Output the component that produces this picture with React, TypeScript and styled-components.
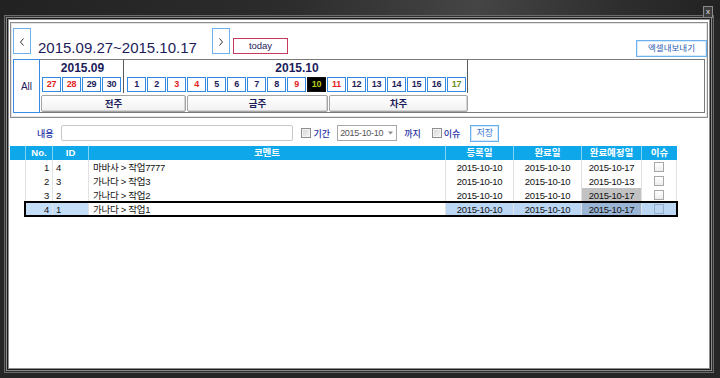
import React from 'react';
import styled, { createGlobalStyle } from 'styled-components';

const GlobalStyle = createGlobalStyle`
  html, body { margin: 0; padding: 0; background: #262626; }
  body { font-family: "Liberation Sans", "Noto Sans CJK KR", sans-serif; font-size: 10px; }
  * { box-sizing: border-box; }
`;

const NAVY = '#1c1c5a';
const RED = '#e02424';

type Day = { n: number; color?: string; today?: boolean };

const sepDays: Day[] = [
  { n: 27, color: RED },
  { n: 28, color: RED },
  { n: 29 },
  { n: 30 },
];

const octDays: Day[] = Array.from({ length: 17 }, (_, i) => {
  const n = i + 1;
  if (n === 10) return { n, today: true };
  if ([3, 4, 9, 11].includes(n)) return { n, color: RED };
  if (n === 17) return { n, color: '#6b8a2a' };
  return { n };
});

const rows = [
  { no: 1, id: 4, comment: '마바사 > 작업7777', reg: '2015-10-10', done: '2015-10-10', due: '2015-10-17' },
  { no: 2, id: 3, comment: '가나다 > 작업3', reg: '2015-10-10', done: '2015-10-10', due: '2015-10-13' },
  { no: 3, id: 2, comment: '가나다 > 작업2', reg: '2015-10-10', done: '2015-10-10', due: '2015-10-17', marked: true },
  { no: 4, id: 1, comment: '가나다 > 작업1', reg: '2015-10-10', done: '2015-10-10', due: '2015-10-17', selected: true },
];

const App = () => {
  return (
    <Window>
      <GlobalStyle />
      <TitleBar>
        <CloseBtn>x</CloseBtn>
      </TitleBar>
      <Frame>
        <Panel>
          <HeadRow>
            <NavBtn>
              <svg width="6" height="8" viewBox="0 0 6 8">
                <polyline points="4.5,0.5 1.5,4 4.5,7.5" fill="none" stroke="#333" strokeWidth="1" />
              </svg>
            </NavBtn>
            <RangeTitle>2015.09.27~2015.10.17</RangeTitle>
            <NavBtn>
              <svg width="6" height="8" viewBox="0 0 6 8">
                <polyline points="1.5,0.5 4.5,4 1.5,7.5" fill="none" stroke="#333" strokeWidth="1" />
              </svg>
            </NavBtn>
            <TodayBtn>today</TodayBtn>
            <ExcelBtn>엑셀내보내기</ExcelBtn>
          </HeadRow>

          <CalBox>
            <AllCell>All</AllCell>
            <CalArea>
              <MonthsBlock>
                <MonthRow>
                  <MonthPanel $w={84} $pl={2}>
                    <MonthLabel>2015.09</MonthLabel>
                    <DayRow>
                      {sepDays.map((d) => (
                        <DayCell key={d.n} $color={d.color}>{d.n}</DayCell>
                      ))}
                    </DayRow>
                  </MonthPanel>
                  <MonthPanel $w={344} $pl={3}>
                    <MonthLabel>2015.10</MonthLabel>
                    <DayRow>
                      {octDays.map((d) => (
                        <DayCell key={d.n} $color={d.color} $today={d.today}>{d.n}</DayCell>
                      ))}
                    </DayRow>
                  </MonthPanel>
                </MonthRow>
                <WeekRow>
                  <WeekBtn>전주</WeekBtn>
                  <WeekBtn>금주</WeekBtn>
                  <WeekBtn>차주</WeekBtn>
                </WeekRow>
              </MonthsBlock>
            </CalArea>
          </CalBox>
        </Panel>

        <SearchRow>
          <Label>내용</Label>
          <TextBox $ml={7} />
          <Check $ml={8} />
          <Label $ml={3}>기간</Label>
          <Combo>
            <span>2015-10-10</span>
            <svg width="5" height="4" viewBox="0 0 5 4">
              <polygon points="0,0.5 5,0.5 2.5,3.5" fill="#8a8a8a" />
            </svg>
          </Combo>
          <Label $ml={7}>까지</Label>
          <Check $ml={11} />
          <Label $ml={2}>이슈</Label>
          <SaveBtn>저장</SaveBtn>
        </SearchRow>

        <Table>
          <THead>
            <HeadCell $first />
            <HeadCell>No.</HeadCell>
            <HeadCell>ID</HeadCell>
            <HeadCell>코멘트</HeadCell>
            <HeadCell>등록일</HeadCell>
            <HeadCell>완료일</HeadCell>
            <HeadCell>완료예정일</HeadCell>
            <HeadCell>이슈</HeadCell>
          </THead>
          {rows.map((r) => (
            <Row key={r.no}>
              <RowHead />
              <RowBody $selected={r.selected}>
                <Cell $align="right" $bg={r.selected ? '#c4def8' : undefined}>{r.no}</Cell>
                <Cell $align="left" $bg={r.selected ? '#c4def8' : undefined}>{r.id}</Cell>
                <Cell $align="left" $pad={4}>{r.comment}</Cell>
                <Cell $bg={r.selected ? '#bcd7f4' : undefined}>{r.reg}</Cell>
                <Cell $bg={r.selected ? '#bcd7f4' : undefined}>{r.done}</Cell>
                <Cell $bg={r.selected ? '#9bb5d4' : r.marked ? '#c2c2c2' : undefined}>{r.due}</Cell>
                <Cell $last $bg={r.selected ? '#bcd7f4' : undefined}>
                  <IssueBox $clear={r.selected} />
                </Cell>
              </RowBody>
            </Row>
          ))}
        </Table>
      </Frame>
    </Window>
  );
};

export default App;

const Window = styled.div`
  width: 720px;
  height: 378px;
  overflow: hidden;
  background: #262626;
`;

const TitleBar = styled.div`
  height: 19px;
  display: flex;
  justify-content: flex-end;
  padding: 6px 7px 0 0;
  background: linear-gradient(90deg, #222 0%, #2c2c2c 40%, #454545 66%, #2e2e2e 86%, #222 100%);
`;

const CloseBtn = styled.div`
  width: 10px;
  height: 12px;
  border: 1px solid #8a8a8a;
  background: #3c3c3c;
  color: #e0e0e0;
  font-size: 8px;
  line-height: 9px;
  text-align: center;
`;

const Frame = styled.div`
  margin: 0 10px 0 8px;
  height: 350px;
  border: 1px solid #8e8e8e;
  background: #fff;
  padding: 2px 1px 0 1px;
  box-shadow: 0 0 0 1px #1c1c1c, 0 0 0 2px #8a8a8a, 0 0 0 3px #2e2e2e, 0 0 0 4px #6a6a6a;
`;

const Panel = styled.div`
  height: 96px;
  border: 1px solid #8c8c8c;
  box-shadow: inset 0 0 0 1px #e4e4e4;
  padding: 5px 2px 4px 2px;
  display: flex;
  flex-direction: column;
`;

const HeadRow = styled.div`
  display: flex;
  align-items: flex-start;
  height: 28px;
`;

const NavBtn = styled.div`
  width: 18px;
  height: 26px;
  border: 1px solid #6cb0ee;
  background: #fff;
  display: flex;
  justify-content: center;
  padding-top: 9px;
`;

const RangeTitle = styled.div`
  width: 174px;
  margin: 12px 0 0 7px;
  font-size: 15px;
  line-height: 15px;
  color: ${NAVY};
  white-space: nowrap;
`;

const TodayBtn = styled.div`
  width: 55px;
  height: 16px;
  margin: 10px 0 0 3px;
  border: 1px solid #c83a5c;
  color: ${NAVY};
  font-size: 9.5px;
  line-height: 14px;
  text-align: center;
`;

const ExcelBtn = styled.div`
  width: 71px;
  height: 17px;
  margin: 12px -2px 0 auto;
  border: 1px solid #6cb0ee;
  box-shadow: inset 0 0 0 1px #d8ebfc;
  color: #2a5ab0;
  font-size: 8.5px;
  line-height: 15px;
  text-align: center;
`;

const CalBox = styled.div`
  display: flex;
  height: 54px;
  margin-top: 3px;
`;

const AllCell = styled.div`
  width: 27px;
  border: 1px solid #3a8de0;
  display: flex;
  align-items: center;
  justify-content: center;
  color: ${NAVY};
  font-size: 10px;
`;

const CalArea = styled.div`
  flex: 1;
  border: 1px solid #7a7a7a;
  border-left: none;
  display: flex;
`;

const MonthsBlock = styled.div`
  width: 428px;
  display: flex;
  flex-direction: column;
`;

const MonthRow = styled.div`
  display: flex;
  height: 33px;
`;

const MonthPanel = styled.div<{ $w: number; $pl: number }>`
  width: ${(p) => p.$w}px;
  padding-left: ${(p) => p.$pl}px;
  border-right: 1px solid #5a5a5a;
`;

const MonthLabel = styled.div`
  height: 17px;
  line-height: 17px;
  text-align: center;
  font-size: 12px;
  font-weight: bold;
  color: ${NAVY};
`;

const DayRow = styled.div`
  display: flex;
  gap: 1px;
`;

const DayCell = styled.div<{ $color?: string; $today?: boolean }>`
  width: 19px;
  height: 15px;
  border: 1px solid ${(p) => (p.$today ? '#111' : '#3289e2')};
  background: ${(p) => (p.$today ? '#000' : '#fff')};
  color: ${(p) => (p.$today ? '#b4cc1e' : p.$color || NAVY)};
  font-size: 9px;
  font-weight: bold;
  line-height: 13px;
  text-align: center;
  letter-spacing: -0.3px;
`;

const WeekRow = styled.div`
  display: grid;
  grid-template-columns: 145px 141px 139px;
  column-gap: 1px;
  margin: 2px 0 0 1px;
  height: 17px;
`;

const WeekBtn = styled.div`
  border: 1px solid #a4a4a4;
  border-radius: 2px;
  background: linear-gradient(#ffffff, #f1f1f1);
  box-shadow: inset -1px -1px 0 #d4d4d4;
  color: ${NAVY};
  font-size: 9.5px;
  font-weight: bold;
  line-height: 15px;
  text-align: center;
`;

const SearchRow = styled.div`
  display: flex;
  align-items: center;
  height: 18px;
  margin-top: 6px;
  padding-left: 27px;
`;

const Label = styled.span<{ $ml?: number }>`
  margin-left: ${(p) => p.$ml || 0}px;
  color: #1f32a6;
  font-size: 9px;
  font-weight: 500;
  white-space: nowrap;
`;

const TextBox = styled.div<{ $ml: number }>`
  width: 232px;
  height: 16px;
  margin-left: ${(p) => p.$ml}px;
  border: 1px solid #c8c8c8;
  border-radius: 2px;
`;

const Check = styled.span<{ $ml: number }>`
  width: 10px;
  height: 10px;
  margin-left: ${(p) => p.$ml}px;
  border: 1px solid #8e8e8e;
  background: linear-gradient(135deg, #d4d4d4, #f6f6f6);
  box-shadow: inset 0 0 0 1px #f4f4f4;
`;

const Combo = styled.div`
  width: 60px;
  height: 16px;
  margin-left: 7px;
  border: 1px solid #a8a8a8;
  display: flex;
  align-items: center;
  justify-content: space-between;
  padding: 0 3px 0 2px;
  color: #555;
  font-size: 9px;
  letter-spacing: -0.3px;
`;

const SaveBtn = styled.div`
  width: 29px;
  height: 17px;
  margin-left: 10px;
  border: 1px solid #6aaeee;
  box-shadow: inset 0 0 0 1px #d2e8fb;
  color: #3a78d0;
  font-size: 9px;
  line-height: 15px;
  text-align: center;
`;

const Table = styled.div`
  width: 667px;
  margin-top: 4px;
`;

const THead = styled.div`
  display: grid;
  grid-template-columns: 15px 27px 36px 357px 68px 68px 60px 36px;
  height: 14px;
  background: #0ea8ea;
`;

const HeadCell = styled.div<{ $first?: boolean }>`
  border-left: ${(p) => (p.$first ? 'none' : '1px solid #82d2f3')};
  color: #fff;
  font-size: 9.5px;
  font-weight: bold;
  line-height: 14px;
  text-align: center;
  white-space: nowrap;
`;

const Row = styled.div`
  display: flex;
  height: 14px;
`;

const RowHead = styled.div`
  width: 15px;
`;

const RowBody = styled.div<{ $selected?: boolean }>`
  display: grid;
  grid-template-columns: 27px 36px 357px 68px 68px 60px 36px;
  outline: ${(p) => (p.$selected ? '2px solid #000' : 'none')};
  outline-offset: -1px;
`;

const Cell = styled.div<{ $align?: string; $bg?: string; $pad?: number; $last?: boolean }>`
  border-left: 1px solid #e2e2e2;
  border-right: ${(p) => (p.$last ? '1px solid #e2e2e2' : 'none')};
  border-bottom: 1px solid #e2e2e2;
  background: ${(p) => p.$bg || '#fff'};
  display: flex;
  align-items: center;
  justify-content: ${(p) => (p.$align === 'right' ? 'flex-end' : p.$align === 'left' ? 'flex-start' : 'center')};
  padding: 0 ${(p) => (p.$align === 'right' ? 3 : 0)}px 0 ${(p) => (p.$align === 'left' ? p.$pad || 3 : 0)}px;
  color: #111;
  font-size: 9.5px;
  letter-spacing: -0.3px;
  white-space: nowrap;
`;

const IssueBox = styled.span<{ $clear?: boolean }>`
  width: 10px;
  height: 10px;
  border: 1px solid ${(p) => (p.$clear ? '#98aec8' : '#a8a8a8')};
  background: ${(p) => (p.$clear ? 'transparent' : 'linear-gradient(#ffffff, #eeeeee)')};
`;
